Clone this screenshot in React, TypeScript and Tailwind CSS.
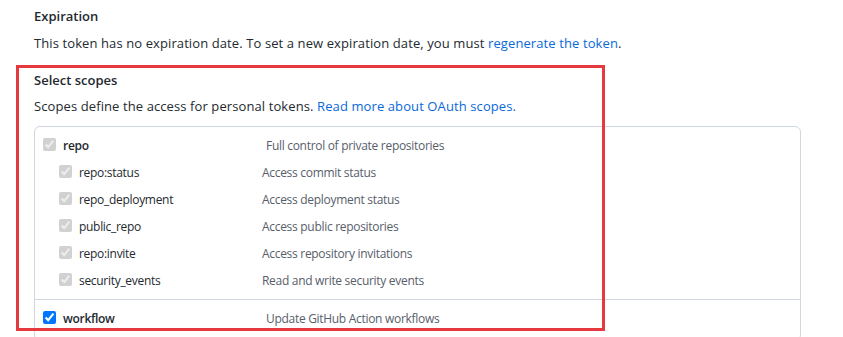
import React from "react";

type Scope = { name: string; desc: string };

const subScopes: Scope[] = [
  { name: "repo:status", desc: "Access commit status" },
  { name: "repo_deployment", desc: "Access deployment status" },
  { name: "public_repo", desc: "Access public repositories" },
  { name: "repo:invite", desc: "Access repository invitations" },
  { name: "security_events", desc: "Read and write security events" },
];

const font = { fontFamily: '"Open Sans", "Noto Sans", sans-serif' };

function Check({ disabled }: { disabled?: boolean }) {
  return (
    <input
      type="checkbox"
      checked
      readOnly
      disabled={disabled}
      className="w-[13px] h-[13px] m-0 shrink-0 -translate-y-px"
    />
  );
}

export default function App() {
  return (
    <div className="relative w-[843px] h-[337px] overflow-hidden bg-white text-[#24292f]" style={font}>
      <div className="pl-[34px] pt-[6px]">
        {/* Expiration */}
        <h3 className="text-[13px] font-semibold leading-5">Expiration</h3>
        <p className="mt-[7px] text-[13px] leading-5 tracking-[0.1px]">
          This token has no expiration date. To set a new expiration date, you must{" "}
          <a className="text-[#0969da]">regenerate the token</a>.
        </p>

        {/* Scopes */}
        <h3 className="mt-[17px] text-[13px] font-semibold leading-5">Select scopes</h3>
        <p className="mt-[6px] text-[13px] leading-5 tracking-[0.1px]">
          Scopes define the access for personal tokens.{" "}
          <a className="text-[#0969da]">Read more about OAuth scopes.</a>
        </p>

        <div className="mt-[10px] w-[767px] border border-[#d0d7de] rounded-md text-[12px] tracking-[-0.3px]">
          <div className="pt-[5px] pb-[5px] border-b border-[#d0d7de]">
            <div className="flex items-center h-[27px] pl-[8px]">
              <Check disabled />
              <span className="ml-[7px] w-[203px] font-semibold">repo</span>
              <span className="text-[#57606a]">Full control of private repositories</span>
            </div>
            {subScopes.map((s) => (
              <div key={s.name} className="flex items-center h-[27px] pl-[24px]">
                <Check disabled />
                <span className="ml-[7px] w-[183px]">{s.name}</span>
                <span className="text-[#57606a]">{s.desc}</span>
              </div>
            ))}
          </div>
          <div className="pt-[5px] pb-[8px]">
            <div className="flex items-center h-[27px] pl-[8px]">
              <Check />
              <span className="ml-[7px] w-[203px] font-semibold">workflow</span>
              <span className="text-[#57606a]">Update GitHub Action workflows</span>
            </div>
          </div>
        </div>
      </div>

      {/* red highlight annotation */}
      <div className="absolute left-[16px] top-[65px] w-[589px] h-[266px] border-[3px] border-[#e5393f] pointer-events-none" />
    </div>
  );
}
